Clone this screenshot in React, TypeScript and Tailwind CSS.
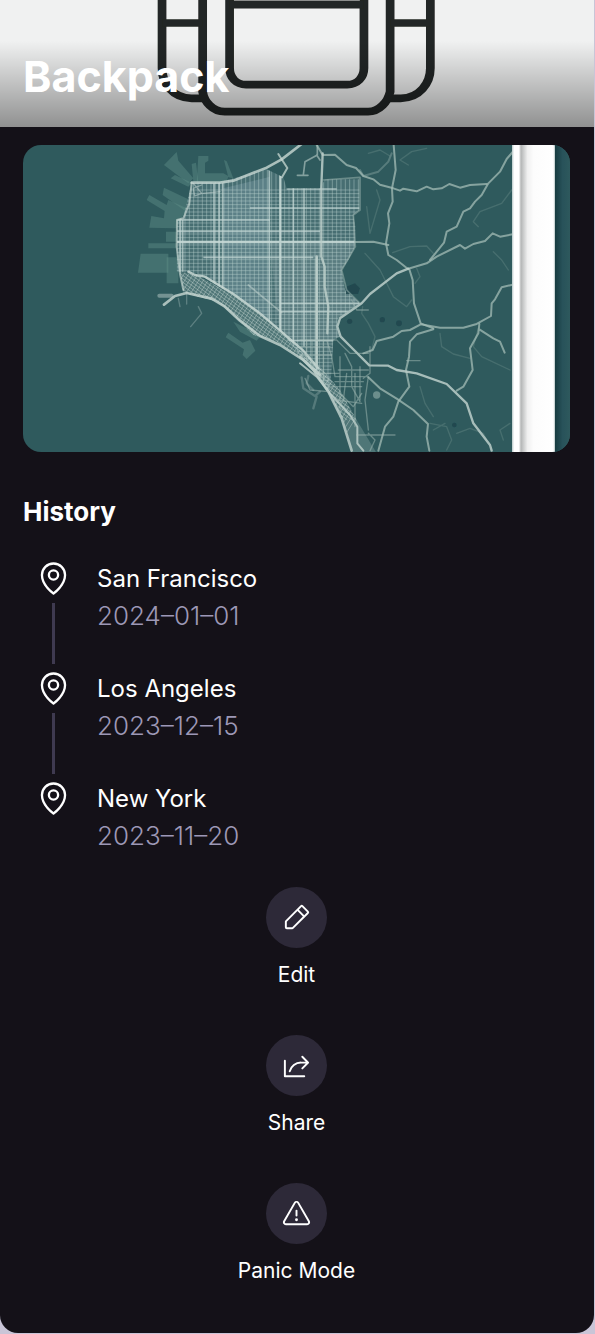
import { PiMapPin, PiPencilSimple, PiShare, PiWarning } from "react-icons/pi";
import type { IconType } from "react-icons";

type Stop = { city: string; date: string };
type Action = { label: string; Icon: IconType };

const stops: Stop[] = [
  { city: "San Francisco", date: "2024–01–01" },
  { city: "Los Angeles", date: "2023–12–15" },
  { city: "New York", date: "2023–11–20" },
];

const actions: Action[] = [
  { label: "Edit", Icon: PiPencilSimple },
  { label: "Share", Icon: PiShare },
  { label: "Panic Mode", Icon: PiWarning },
];

function steps(from: number, to: number, gap: number): number[] {
  const out: number[] = [];
  for (let v = from; v <= to; v += gap) out.push(v);
  return out;
}

function BackpackDrawing() {
  return (
    <svg
      viewBox="0 0 594 127"
      preserveAspectRatio="xMidYMax slice"
      className="absolute inset-0 h-full w-full"
      aria-hidden="true"
    >
      <defs>
        <filter id="soft" x="-5%" y="-5%" width="110%" height="110%">
          <feGaussianBlur stdDeviation="0.7" />
        </filter>
      </defs>
      <rect width="594" height="127" fill="#f0f1f1" />
      <g filter="url(#soft)">
        <g transform="scale(0.3795 0.33333)" fill="none" stroke="#232625" strokeWidth="23">
          <path d="M427 -20V205C427 250 455 295 505 295H540" />
          <path d="M1134 -20V205C1134 250 1105 295 1056 295H1022" />
          <path d="M534 -20V275C538 305 560 335 592 335H970C1000 335 1022 305 1028 275V-20" />
          <path d="M605 -20V205C605 232 622 254 648 254H915C942 254 959 232 959 205V-20" />
          <path d="M605 14H959M427 69H534M1028 69H1134" />
        </g>
      </g>
      <rect x="234" width="125" height="1" fill="#8c8d8c" />
    </svg>
  );
}

function MapDrawing() {
  return (
    <svg
      viewBox="0 0 547 307"
      preserveAspectRatio="xMidYMid slice"
      className="block h-full w-full"
      role="img"
      aria-label="Map of the last location"
    >
      <defs>
        <filter id="haze" x="0" y="0" width="100%" height="100%">
          <feGaussianBlur stdDeviation="0.5" />
        </filter>
        <clipPath id="city">
          <path d="M515 128L600 126L740 88L790 112L800 145H900L915 118H1018V210L1000 225L1006 260L1005 320L985 360L965 390L975 450L1020 490L955 535L950 560L960 590L940 600L930 760L840 645L790 582L720 520L640 465L530 400L470 395L470 240L490 232Z" />
        </clipPath>
        <clipPath id="coast">
          <path d="M480 395L530 405L640 465L720 520L790 580L850 640L900 680L960 750L1010 840L1070 940H1000L970 840L925 760L860 665L770 605L700 585L640 525L590 485L490 458Z" />
        </clipPath>
        <linearGradient id="fold" x1="0" x2="1" y1="0" y2="0">
          <stop offset="0" stopColor="#b9c9c9" />
          <stop offset="0.05" stopColor="#ffffff" />
          <stop offset="0.16" stopColor="#ffffff" />
          <stop offset="0.21" stopColor="#b4b6b6" />
          <stop offset="0.36" stopColor="#f0f0f0" />
          <stop offset="0.5" stopColor="#fcfcfc" />
          <stop offset="0.96" stopColor="#ffffff" />
          <stop offset="1" stopColor="#b4c4c4" />
        </linearGradient>
        <linearGradient id="edge" x1="0" x2="1" y1="0" y2="0">
          <stop offset="0" stopColor="#173b40" />
          <stop offset="0.5" stopColor="#28525a" />
          <stop offset="1" stopColor="#2e595d" />
        </linearGradient>
      </defs>
      <rect width="547" height="307" fill="#2f5a5d" />

      <g filter="url(#haze)">
        <g transform="translate(-3 -5) scale(0.33333)">
          <g fill="#62918a" fillOpacity="0.42">
            <path d="M432 75L470 36L475 62L520 115L505 130Z" />
            <path d="M535 48H565V62L555 68V100H610L625 108L620 128H530Z" />
            <path d="M612 60L620 64L640 115L625 112Z" />
            <path d="M515 72L528 68L535 125H520Z" />
            <path d="M465 105L515 128L505 140L452 115Z" />
            <path d="M432 143L505 178L495 212L428 165Z" />
            <path d="M388 165L440 195L445 180L500 205L485 235L470 265L388 263L394 228L432 235L434 213L380 180Z" />
            <path d="M385 310H470V325H385ZM362 341H445V398H354Z" />
            <path d="M438 275H470V305H438ZM440 352H475V430H440Z" />
            <path d="M625 578L668 608L690 600L706 632L680 657L668 645L672 628L617 592Z" />
            <path d="M640 545L690 570L720 590L710 602L660 575Z" />
          </g>
          <g clipPath="url(#city)">
            <rect x="460" y="80" width="660" height="830" fill="#8aa6ac" fillOpacity="0.26" />
            <path d="M610 145L750 110V550L610 440Z" fill="#8aa8b4" fillOpacity="0.32" />
            <path d="M750 310H1060V600H780Z" fill="#9ab0b2" fillOpacity="0.22" />
            <g stroke="#bed3d1" strokeOpacity="0.42" strokeWidth="3">
              {steps(482, 1100, 13).map((x) => (
                <path key={x} d={`M${x} 80V910`} />
              ))}
              {steps(150, 900, 11).map((y) => (
                <path key={y} d={`M460 ${y}H1120`} />
              ))}
            </g>
            <g stroke="#c5d8d5" strokeOpacity="0.7" strokeWidth="5">
              <path d="M480 240V395M488 240V395M582 130V440M597 128V450M608 128V450M748 88V555M820 145V610M852 145V620M890 350V690" />
              <path d="M800 147H950M690 204H1080M470 240H750M470 274H900M550 352H880M780 490H1080M780 515H1080M800 602H1000" />
              <path d="M470 306H1160M781 90V580" strokeWidth="7" strokeOpacity="0.9" />
            </g>
          </g>
          <g clipPath="url(#coast)">
            <path d="M470 380H1080V940H470Z" fill="#9cb5b2" fillOpacity="0.3" />
            <g stroke="#c9dbd7" strokeOpacity="0.5" strokeWidth="2.5">
              {steps(470, 1300, 14).map((x) => (
                <path key={x} d={`M${x} 370L${x - 330} 900M${x - 480} 400L${x + 120} 840`} />
              ))}
            </g>
          </g>
          <g fill="none" stroke="#c8d8d3" strokeLinecap="round" strokeLinejoin="round">
            <path d="M515 128H600L640 122L740 83L785 58L845 12" strokeWidth="8" strokeOpacity="0.8" />
            <path d="M775 42L785 58L802 84L786 112" strokeWidth="6" strokeOpacity="0.75" />
            <path d="M515 128L508 190L490 235L471 240L470 320L480 402L490 450" strokeWidth="6" strokeOpacity="0.65" />
            <path d="M520 130L545 160L524 168L520 145L545 135M550 160L600 155" strokeWidth="4" strokeOpacity="0.5" />
            <path d="M432 494L465 468L500 459L575 476L615 500L660 542L720 588L780 615L850 660L900 704" strokeWidth="8" strokeOpacity="0.8" />
            <path d="M505 395L525 405L555 410L640 462L720 520L790 580L850 632L895 685" strokeWidth="7" strokeOpacity="0.85" />
            <path d="M418 467H455" strokeWidth="12" strokeOpacity="0.45" />
            <path d="M500 460V492M475 475L480 500M535 500L545 520L512 560" strokeWidth="4" strokeOpacity="0.3" />
            <path d="M865 708L860 730L880 750M845 712L850 745L885 768L900 755M890 770L880 805" strokeWidth="7" strokeOpacity="0.25" />
            <path d="M685 435L785 518" strokeWidth="5" strokeOpacity="0.5" />
            <path d="M892 14V45L855 65L850 105M832 106H864M890 45L900 60" strokeWidth="5" strokeOpacity="0.55" />
          </g>
        </g>

        <g transform="translate(277 -5) scale(0.33333)">
          <g fill="#1d464e" fillOpacity="0.85">
            <path d="M138 440L165 430L180 445L174 462H138Z" />
            <circle cx="247" cy="539" r="8" />
            <circle cx="297" cy="550" r="9" />
            <circle cx="149" cy="544" r="8" />
            <circle cx="463" cy="855" r="7" />
          </g>
          <g fill="none" stroke="#a3bcb6" strokeLinejoin="round" strokeLinecap="round">
            <g strokeWidth="4" strokeOpacity="0.2">
              <path d="M195 340L240 390L280 470L320 500L335 480M278 338L330 320L380 318L400 340M350 385L360 410L345 430" />
              <path d="M188 500L185 520L205 550L225 590L215 630M420 580L425 620L460 642L510 655M535 565L520 620L545 650L630 690" />
              <path d="M635 150L605 190L540 215L520 245L535 260M580 335L605 360L625 390M200 200L210 280L240 180L230 150" />
              <path d="M360 740L375 790L400 830M390 850L440 860L455 900L440 930M400 870L435 850M470 880L510 865L550 880L560 900M610 900L600 870L630 850M325 75L300 60L335 35L380 25M205 40L240 30L270 48" />
            </g>
            <path d="M70 120L180 112V210L160 225L166 320L125 390L140 450L180 490" strokeWidth="5" strokeOpacity="0.5" />
            <g strokeWidth="6" strokeOpacity="0.75">
              <path d="M50 15L68 45L105 44L140 75L168 84L190 108L220 118L240 134L280 145L300 152L310 146L350 154L380 140L400 148L425 145L448 132L480 143L510 135L560 132" />
              <path d="M281 15L287 90L276 145L278 185L264 220L268 250L258 310L265 345L290 360L323 386" />
              <path d="M638 36L620 57L600 95L565 130L545 165L525 185L510 205L490 215L470 260L440 275L432 308L390 360" />
              <path d="M325 386L380 370L410 350L480 315L495 326L520 312L555 303L578 280L600 290L638 283" />
              <path d="M638 434L605 442L585 478L575 490L573 528L530 552L490 563H420L362 553L330 570L305 573L280 590L230 603L218 630L190 640" />
              <path d="M328 388L338 420L342 490L362 550L400 565" />
              <path d="M400 568L350 583L330 605L327 650L318 690L328 740L295 785L280 830L255 860L235 932" />
              <path d="M538 552L535 580L510 625L518 690L490 740L470 752M538 568L580 595L600 605L614 638" />
              <path d="M205 712L240 745L290 776L340 810L384 852L380 890L388 932M165 306L220 305L265 315" />
              <path d="M180 90L190 108L235 95L265 65L275 40" strokeOpacity="0.35" />
            </g>
            <g stroke="#bccfca" strokeWidth="7" strokeOpacity="0.85">
              <path d="M325 386L290 400L210 462L185 490L120 535L112 560L122 590L150 618L208 676L265 677L290 690L350 700L440 732L500 790L520 850L570 915L575 932" />
              <path d="M68 40L64 140V350L74 380V440L85 500L82 580" />
              <path d="M50 350V680M0 650L40 690L85 755L125 835L155 932" strokeWidth="8" />
              <path d="M0 670L50 710L90 760L150 825L172 860V910L190 932" strokeWidth="6" />
            </g>
            <g strokeWidth="4" strokeOpacity="0.5">
              <path d="M80 600L95 650L105 710H205L195 780L205 870M210 620V700L190 715M135 640L155 680V740L180 785M95 740H185M120 760L160 800L185 760M170 885H285M205 880L225 900L210 932M15 715L30 750L85 755M0 600H110L150 640H205M320 662H360M115 690H205M155 480L170 510H205" />
              <path d="M0 620H90M0 645H95M20 600V660M36 600V680M70 600V720M120 650V830M140 700L130 780M165 700V860M180 680V780M105 725H190M110 780L185 790M60 700H120" />
            </g>
          </g>
          <circle cx="230" cy="765" r="11" fill="#a7c2bb" fillOpacity="0.5" />
        </g>
      </g>

      <rect x="489" width="43" height="307" fill="url(#fold)" />
      <rect x="532" width="15" height="307" fill="url(#edge)" />
    </svg>
  );
}

export default function App() {
  return (
    <div className="bg-[#c9c5d7] pr-px pb-px font-['Inter','Noto_Sans',sans-serif] text-white">
      <main className="overflow-hidden rounded-b-[18px] bg-[#141118]">
        <header className="relative h-[127px] overflow-hidden">
          <BackpackDrawing />
          <div className="absolute inset-x-0 bottom-0 h-[86px] bg-linear-to-t from-black/40 to-transparent" />
          <h1 className="absolute bottom-6 left-[23px] text-[43px] leading-[54px] font-bold">
            Backpack
          </h1>
        </header>

        <div className="pt-[18px] pr-6 pb-11 pl-[23px]">
          <div className="aspect-[547/307] overflow-hidden rounded-[18px]">
            <MapDrawing />
          </div>

          <section>
            <h2 className="pt-[42px] pb-[30px] text-[26px] leading-9 font-bold">History</h2>
            <ol>
              {stops.map((stop, i) => (
                <li key={stop.date} className="flex gap-[13px]">
                  <div className="flex w-[61px] flex-col items-center gap-[6px]">
                    <PiMapPin className="h-[37px] w-[37px]" aria-hidden="true" />
                    {i < stops.length - 1 && <span className="mb-[6px] h-[61px] w-[3px] bg-[#3f3a50]" />}
                  </div>
                  <div>
                    <p className="text-[24px] leading-[37px]">{stop.city}</p>
                    <p className="text-[26px] leading-[37px] font-light text-[#9d98b6]">
                      <time dateTime={stop.date.replace(/–/g, "-")}>{stop.date}</time>
                    </p>
                  </div>
                </li>
              ))}
            </ol>
          </section>

          <nav className="flex flex-col items-center gap-[42px] pt-[33px]" aria-label="Item actions">
            {actions.map(({ label, Icon }) => (
              <button key={label} type="button" className="flex flex-col items-center gap-[9px]">
                <span className="flex h-[61px] w-[61px] items-center justify-center rounded-full bg-[#2d2938]">
                  <Icon className="h-[31px] w-[31px]" aria-hidden="true" />
                </span>
                <span className="text-[21px] leading-9">{label}</span>
              </button>
            ))}
          </nav>
        </div>
      </main>
    </div>
  );
}
